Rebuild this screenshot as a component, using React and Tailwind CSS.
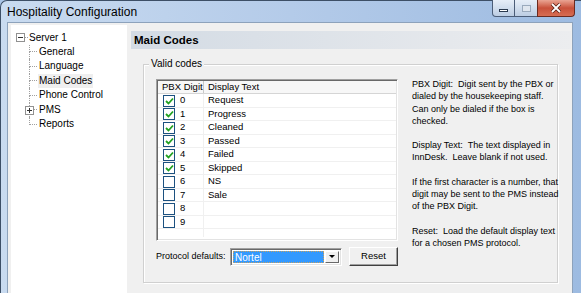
import React from "react";

const rows = [
  { d: "0", t: "Request", c: true },
  { d: "1", t: "Progress", c: true },
  { d: "2", t: "Cleaned", c: true },
  { d: "3", t: "Passed", c: true },
  { d: "4", t: "Failed", c: true },
  { d: "5", t: "Skipped", c: true },
  { d: "6", t: "NS", c: false },
  { d: "7", t: "Sale", c: false },
  { d: "8", t: "", c: false },
  { d: "9", t: "", c: false },
];

const children = ["General", "Language", "Maid Codes", "Phone Control", "PMS", "Reports"];

const CheckBox = ({ checked }) => (
  <div className="w-[12px] h-[12px] border border-[#1c5180] bg-white flex items-center justify-center">
    {checked && (
      <svg width="9" height="8" viewBox="0 0 9 8">
        <path d="M1 4 L3.5 6.5 L8 1.5" fill="none" stroke="#21a121" strokeWidth="1.8" />
      </svg>
    )}
  </div>
);

const TreeBox = ({ plus }) => (
  <div className="w-[9px] h-[9px] border border-[#919191] bg-white flex items-center justify-center relative">
    <div className="w-[5px] h-px bg-[#333]" />
    {plus && <div className="absolute w-px h-[5px] bg-[#333]" />}
  </div>
);

export default function App() {
  return (
    <div className="w-[581px] h-[293px] overflow-hidden bg-[#a9c4e6] font-['Liberation_Sans',Arial,sans-serif] text-black">
      <div className="flex flex-col h-full rounded-tl-[7px] border-l border-t border-[#3d4f66] bg-gradient-to-r from-[#c9dbf0] via-[#b4cbe9] to-[#9dbbe1]">
        {/* title bar */}
        <div className="flex h-[21px] shrink-0">
          <div className="pl-[6px] pt-[4px] text-[12px] leading-[14px]">Hospitality Configuration</div>
          <div className="ml-auto mr-[6px] flex h-[17px] -mt-px">
            <div className="w-[23px] h-full rounded-bl-[4px] border border-[#4b5d78] border-t-0 bg-gradient-to-b from-[#e6eef8] to-[#bccde3] flex items-center justify-center">
              <div className="w-[9px] h-[3px] mt-[4px] border border-[#2b3a4f] bg-white" />
            </div>
            <div className="w-[22px] h-full border-b border-[#4b5d78] bg-gradient-to-b from-[#e6eef8] to-[#bccde3] flex items-center justify-center">
              <div className="w-[9px] h-[7px] border border-[#9aaabd] bg-[#dfe6ef]" />
            </div>
            <div className="w-[38px] h-full rounded-br-[4px] border border-[#6b2a1f] border-t-0 bg-gradient-to-b from-[#e9a493] via-[#c8503a] to-[#d66d52] flex items-center justify-center">
              <svg width="12" height="10" viewBox="0 0 12 10">
                <path d="M2 1 L10 9 M10 1 L2 9" stroke="#5a1e14" strokeWidth="3.4" />
                <path d="M2 1 L10 9 M10 1 L2 9" stroke="#ffffff" strokeWidth="1.8" />
              </svg>
            </div>
          </div>
        </div>

        <div className="flex flex-1 min-h-0 pl-[6px] pr-[8px]">
          <div className="flex flex-1 border-l border-t border-r border-[#8da2bb] bg-[#f0f0f0] pl-[3px] pt-[2px]">
            {/* tree */}
            <div className="w-[116px] shrink-0 bg-white pt-[5px] pl-[5px] text-[10px]">
              <div className="flex items-center h-[14.5px]">
                <TreeBox />
                <div className="w-[3px] border-t border-dotted border-[#a0a0a0]" />
                <span className="ml-px">Server 1</span>
              </div>
              <div className="pl-[13px]">
                {children.map((name, i) => (
                  <div key={name} className="flex h-[14.5px]">
                    <div className="w-[8px] flex flex-col relative">
                      <div className="flex-1 border-l border-b border-dotted border-[#a0a0a0]" />
                      <div className={i === children.length - 1 ? "flex-1" : "flex-1 border-l border-dotted border-[#a0a0a0]"} />
                      {name === "PMS" && (
                        <div className="absolute left-[-4px] top-[3px]">
                          <TreeBox plus />
                        </div>
                      )}
                    </div>
                    <span className={name === "Maid Codes" ? "ml-px px-px leading-[14px] bg-[#efefef]" : "ml-px px-px leading-[14px]"}>
                      {name}
                    </span>
                  </div>
                ))}
              </div>
            </div>

            {/* right panel */}
            <div className="flex-1 ml-[4px] mr-[1px] pt-[6px] flex flex-col">
              <div className="h-[18px] bg-gradient-to-r from-[#d3dbe4] to-[#ecedef] pl-[3px] text-[11.5px] font-bold leading-[18px]">
                Maid Codes
              </div>

              <div className="relative ml-[12px] mt-[15px] w-[415px] h-[219px] border border-[#d0d0d0] shadow-[inset_1px_1px_0_#ffffff,1px_1px_0_#ffffff] pl-[12px] pt-[14px] flex">
                <div className="absolute left-[5px] top-[-7px] px-[2px] bg-[#f0f0f0] text-[10px] leading-[12px]">Valid codes</div>

                <div className="w-[242px] shrink-0 flex flex-col">
                  {/* list view */}
                  <div className="h-[162px] border border-t-[#a0a0a0] border-l-[#a0a0a0] border-r-white border-b-white shadow-[inset_1px_1px_0_#696969,inset_-1px_-1px_0_#e3e3e3] p-px bg-white text-[9.5px]">
                    <div className="flex h-[13px] bg-[#f7f7f7] border-b border-[#d5d5d5] leading-[12px] whitespace-nowrap">
                      <div className="w-[46px] pl-[4px] border-r border-[#c8c8c8]">PBX Digit</div>
                      <div className="pl-[4px]">Display Text</div>
                    </div>
                    {rows.map((r, i) => (
                      <div key={r.d} className={i % 2 === 0 ? "flex h-[14px] border-b border-[#f0f0f0]" : "flex h-[13px] border-b border-[#f0f0f0]"}>
                        <div className="w-[46px] pl-[5px] flex items-center border-r border-[#f0f0f0]">
                          <CheckBox checked={r.c} />
                          <span className="ml-[5px]">{r.d}</span>
                        </div>
                        <div className="pl-[4px] flex items-center">{r.t}</div>
                      </div>
                    ))}
                    <div className="flex flex-1 h-[8px]">
                      <div className="w-[46px] border-r border-[#f0f0f0]" />
                    </div>
                  </div>

                  {/* protocol row */}
                  <div className="flex items-center mt-[6px] text-[9.5px] whitespace-nowrap">
                    <span className="w-[74px] text-[9px]">Protocol defaults:</span>
                    <div className="w-[112px] h-[18px] border border-t-[#a0a0a0] border-l-[#a0a0a0] border-r-white border-b-white shadow-[inset_1px_1px_0_#696969,inset_-1px_-1px_0_#e3e3e3] bg-white p-[2px] flex">
                      <div className="flex-1 bg-[#3399ff] border border-dotted border-[#c8a060] text-white text-[10px] leading-[11px] pl-px">Nortel</div>
                      <div className="w-[14px] ml-px bg-[#f0f0f0] border border-t-white border-l-white border-r-[#696969] border-b-[#696969] flex items-center justify-center">
                        <div className="w-0 h-0 border-l-[3px] border-r-[3px] border-t-[3px] border-l-transparent border-r-transparent border-t-black" />
                      </div>
                    </div>
                    <div className="ml-[7px] w-[49px] h-[19px] border border-t-white border-l-white border-r-[#404040] border-b-[#404040] shadow-[inset_-1px_-1px_0_#a0a0a0] bg-[#f0f0f0] flex items-center justify-center">
                      Reset
                    </div>
                  </div>
                </div>

                {/* help text */}
                <div className="ml-[14px] -mt-px text-[9px] leading-[12.3px] whitespace-pre">
                  <p>PBX Digit:  Digit sent by the PBX or<br />dialed by the housekeeping staff.<br />Can only be dialed if the box is<br />checked.</p>
                  <p className="mt-[12px]">Display Text:  The text displayed in<br />InnDesk.  Leave blank if not used.</p>
                  <p className="mt-[12px]">If the first character is a number, that<br />digit may be sent to the PMS instead<br />of the PBX Digit.</p>
                  <p className="mt-[12px]">Reset:  Load the default display text<br />for a chosen PMS protocol.</p>
                </div>
              </div>
            </div>
          </div>
        </div>
      </div>
    </div>
  );
}
